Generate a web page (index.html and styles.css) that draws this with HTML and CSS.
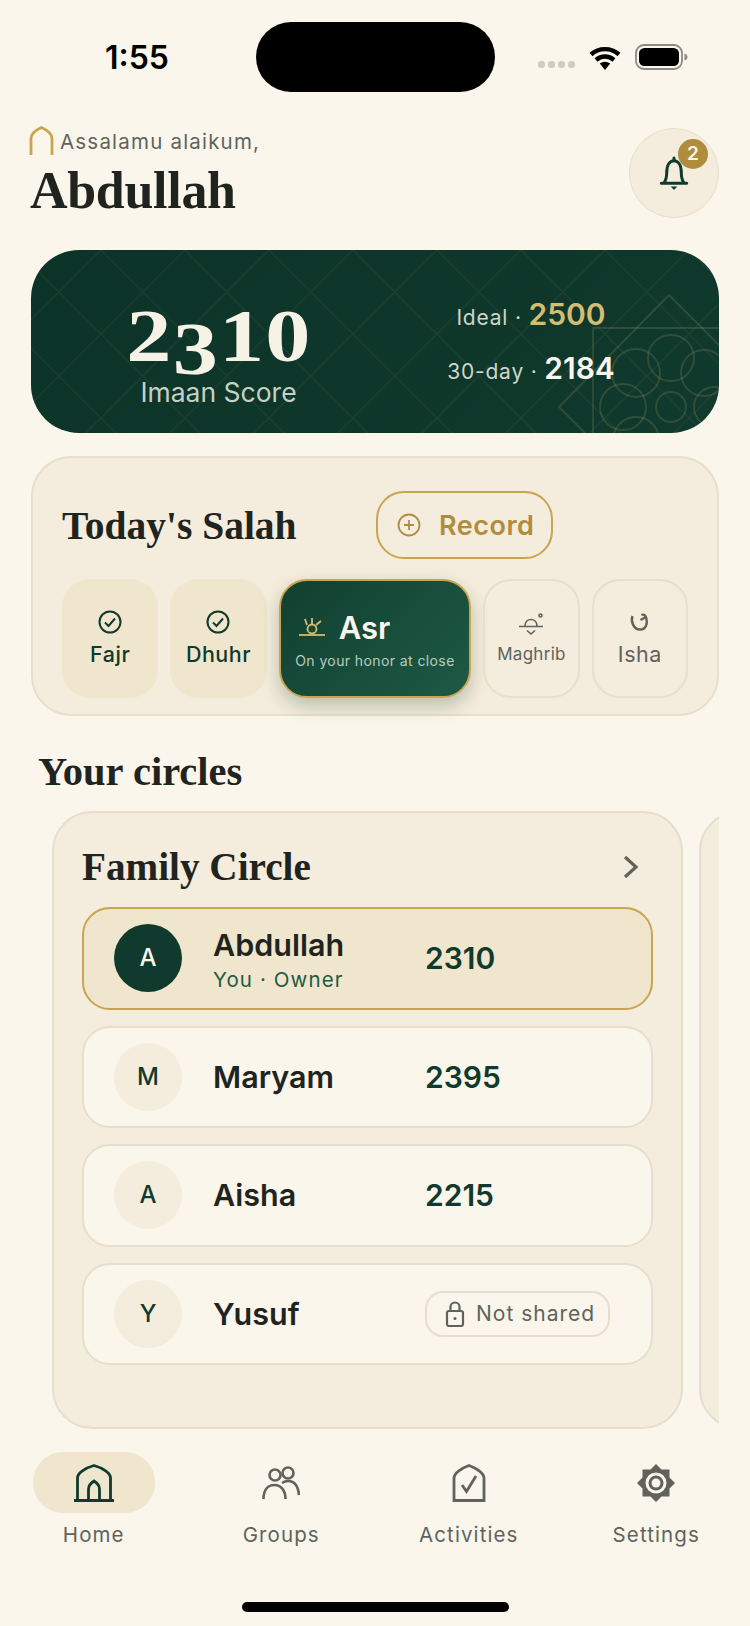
FILE: index.html
```html
<!DOCTYPE html>
<html lang="en">
<head>
    <meta charset="UTF-8">
    <meta name="viewport" content="width=device-width, initial-scale=1.0">
    <title>Imaan Score</title>
    <link rel="stylesheet" href="styles.css">
</head>
<body>
    <div class="status-bar">
        <span class="time">1:55</span>
        <div class="island"></div>
        <div class="status-icons">
            <div class="signal"><i></i><i></i><i></i><i></i></div>
            <svg width="34" height="25" viewBox="0 0 34 25">
                <path d="M17 25l-5.2-6.4a8 8 0 0 1 10.400 0z" fill="#000"/>
                <path d="M3 9.500a21 21 0 0 1 28 0M8 15a13.500 13.500 0 0 1 18 0" fill="none" stroke="#000" stroke-width="4.400"/>
            </svg>
            <svg width="53" height="26" viewBox="0 0 53 26">
                <rect x="1" y="1" width="46" height="24" rx="8" fill="none" stroke="#8a8a86" stroke-width="1.800"/>
                <rect x="4" y="4" width="40" height="18" rx="5.500" fill="#000"/>
                <path d="M49.500 9.500c2 .5 3 2 3 3.500s-1 3-3 3.500z" fill="#8a8a86"/>
            </svg>
        </div>
    </div>

    <header class="header">
        <div>
            <div class="greeting">
                <svg width="25" height="30" viewBox="0 0 25 30"><path d="M2 29V12.500C2 8 7 4 12.500 1.500 18 4 23 8 23 12.500V29" fill="none" stroke="#c9a550" stroke-width="2.800"/></svg>
                <span>Assalamu alaikum,</span>
            </div>
            <h1>Abdullah</h1>
        </div>
        <div class="bell">
            <svg width="30" height="36" viewBox="0 0 32 37">
                <path d="M16 2.500v3M5 29.500c2.500-3 3.200-5.500 3.200-11C8.200 10 11.500 5.500 16 5.500S23.800 10 23.800 18.500c0 5.500.7 8 3.200 11zM2.500 29.500h27" fill="none" stroke="#0f3a2d" stroke-width="3.200" stroke-linecap="round" stroke-linejoin="round"/>
                <path d="M12.500 33h7l-3.500 3.500z" fill="#0f3a2d"/>
            </svg>
            <span class="badge">2</span>
        </div>
    </header>

    <section class="hero">
        <svg class="hero-art" width="688" height="183" viewBox="0 0 688 183">
            <defs>
                <pattern id="lattice" width="84" height="84" patternUnits="userSpaceOnUse" x="-14">
                    <path d="M-2 -2L86 86M86 -2L-2 86" stroke="#c9b37a" stroke-opacity=".08" stroke-width="1.200"/>
                </pattern>
            </defs>
            <rect width="688" height="183" fill="url(#lattice)"/>
            <g fill="none" stroke="#c9b37a" stroke-opacity=".18" stroke-width="1.800">
                <path d="M638 45L528 157L570 199M638 45L730 137"/>
                <path d="M562 199V78H700"/>
                <circle cx="605" cy="123" r="24"/>
                <circle cx="640" cy="108" r="23"/>
                <circle cx="673" cy="123" r="23"/>
                <circle cx="592" cy="157" r="23"/>
                <circle cx="640" cy="157" r="15"/>
                <circle cx="683" cy="157" r="20"/>
                <circle cx="605" cy="190" r="23"/>
            </g>
        </svg>
        <div class="hero-score">
            <div class="score"><span class="digits">2<span class="low">3</span>10</span></div>
            <div class="score-label">Imaan Score</div>
        </div>
        <div class="hero-stats">
            <div class="stat">Ideal · <b class="gold">2500</b></div>
            <div class="stat">30-day · <b>2184</b></div>
        </div>
    </section>

    <section class="salah-card">
        <div class="salah-head">
            <h2>Today's Salah</h2>
            <button class="record">
                <svg width="24" height="24" viewBox="0 0 24 24"><circle cx="12" cy="12" r="10.500" fill="none" stroke="#b08d3c" stroke-width="1.800"/><path d="M12 7v10M7 12h10" stroke="#b08d3c" stroke-width="1.800"/></svg>
                Record
            </button>
        </div>
        <div class="prayers">
            <div class="prayer done">
                <svg width="24" height="24" viewBox="0 0 24 24"><circle cx="12" cy="12" r="10.500" fill="none" stroke="#0f3a2d" stroke-width="2"/><path d="M7 12.500l3.500 3.500L17 8.500" fill="none" stroke="#0f3a2d" stroke-width="2"/></svg>
                <span>Fajr</span>
            </div>
            <div class="prayer done">
                <svg width="24" height="24" viewBox="0 0 24 24"><circle cx="12" cy="12" r="10.500" fill="none" stroke="#0f3a2d" stroke-width="2"/><path d="M7 12.500l3.500 3.500L17 8.500" fill="none" stroke="#0f3a2d" stroke-width="2"/></svg>
                <span>Dhuhr</span>
            </div>
            <div class="prayer current">
                <div class="current-top">
                    <svg width="26" height="18" viewBox="0 0 26 18" fill="none" stroke="#d4bc72" stroke-width="1.800"><path d="M0 17h26"/><circle cx="13" cy="11" r="4.500"/><path d="M8 7L6 1M13 6V0M17 7l5-4"/></svg>
                    <span>Asr</span>
                </div>
                <div class="current-note">On your honor at close</div>
            </div>
            <div class="prayer upcoming small">
                <svg width="26" height="24" viewBox="0 0 26 24" fill="none" stroke="#5f635c" stroke-width="1.600"><path d="M1 13.500h24M7 13c0-4 2.500-6.500 6-6.500s6 2.500 6 6.500M9 17.500l4 3.500 4-3.500"/><circle cx="22.500" cy="2.500" r="1.500"/></svg>
                <span>Maghrib</span>
            </div>
            <div class="prayer upcoming">
                <svg width="24" height="24" viewBox="0 0 24 24" fill="none" stroke="#5f635c" stroke-width="2.400"><path d="M4.500 6C2.500 11 5.500 19.500 12 19.500c6 0 8-6 6-12.500-1-2-3-3-4.500-2"/><path d="M12.500 10l5.500-3"/></svg>
                <span>Isha</span>
            </div>
        </div>
    </section>

    <h2 class="section-title">Your circles</h2>

    <div class="circles">
        <section class="circle-card">
            <div class="circle-head">
                <h2>Family Circle</h2>
                <svg width="18" height="24" viewBox="0 0 18 24"><path d="M3 2l11 10L3 22" fill="none" stroke="#5f635c" stroke-width="3.200"/></svg>
            </div>
            <div class="members">
                <div class="member me">
                    <div class="avatar">A</div>
                    <div class="member-name">Abdullah<small>You · Owner</small></div>
                    <div class="member-score">2310</div>
                </div>
                <div class="member">
                    <div class="avatar">M</div>
                    <div class="member-name">Maryam</div>
                    <div class="member-score">2395</div>
                </div>
                <div class="member">
                    <div class="avatar">A</div>
                    <div class="member-name">Aisha</div>
                    <div class="member-score">2215</div>
                </div>
                <div class="member">
                    <div class="avatar">Y</div>
                    <div class="member-name">Yusuf</div>
                    <div class="not-shared">
                        <svg width="20" height="26" viewBox="0 0 20 26" fill="none" stroke="#5f635c" stroke-width="2.200"><rect x="2" y="10" width="16" height="15" rx="2"/><path d="M5.500 10V6a4.500 4.500 0 0 1 9 0v4"/><circle cx="10" cy="17.500" r="1.500" fill="#5f635c" stroke="none"/></svg>
                        Not shared
                    </div>
                </div>
            </div>
        </section>
        <section class="circle-card"></section>
    </div>

    <nav class="tabs">
        <div class="tab active">
            <div class="tab-icon">
                <svg width="40" height="38" viewBox="0 0 40 38" fill="none" stroke="#0f3a2d" stroke-width="2.800"><path d="M3.500 36V14C3.500 9 11 4 20 1.500 29 4 36.500 9 36.500 14V36M0 36.500h40"/><path d="M14.500 36V25C14.500 22 17 19 20 17 23 19 25.500 22 25.500 25V36"/></svg>
            </div>
            <span>Home</span>
        </div>
        <div class="tab">
            <div class="tab-icon">
                <svg width="38" height="34" viewBox="0 0 38 34" fill="none" stroke="#5f635c" stroke-width="2.600"><ellipse cx="13" cy="9" rx="5.500" ry="5.500"/><ellipse cx="26" cy="7" rx="5.500" ry="5.500"/><path d="M1.500 33c0-10 5-14 11-14s11 5 11 14M20 17c1.500-1 3.500-2 6-2 6 0 10 4 11 14"/></svg>
            </div>
            <span>Groups</span>
        </div>
        <div class="tab">
            <div class="tab-icon">
                <svg width="34" height="38" viewBox="0 0 34 38" fill="none" stroke="#5f635c" stroke-width="2.800"><path d="M2 36.500V14C2 9 10 4 17 1.500 24 4 32 9 32 14v22.500z"/><path d="M10 21l4.500 6.500L24 12"/></svg>
            </div>
            <span>Activities</span>
        </div>
        <div class="tab">
            <div class="tab-icon">
                <svg width="38" height="38" viewBox="0 0 38 38"><path d="M19 0l5.500 5.500H32.500V13.500L38 19l-5.500 5.500V32.500H24.500L19 38l-5.500-5.500H5.500V24.500L0 19l5.500-5.500V5.500H13.500z" fill="#5f635c"/><circle cx="19" cy="19" r="10.500" fill="#fbf6ec"/><circle cx="19" cy="19" r="7.500" fill="#5f635c"/><circle cx="19" cy="19" r="4.500" fill="#fbf6ec"/></svg>
            </div>
            <span>Settings</span>
        </div>
    </nav>

    <div class="home-bar"></div>
</body>
</html>
```

FILE: styles.css
```css
body {
    font-family: Inter, "Liberation Sans", sans-serif;
    background-color: #fbf6ec;
    color: #1f241e;
    margin: 0;
    padding: 0;
    width: 750px;
    height: 1626px;
    overflow: hidden;
    box-sizing: border-box;
}

h1, h2 {
    font-family: "Liberation Serif", serif;
    font-weight: 700;
    margin: 0;
}

/* Status bar */
.status-bar {
    display: flex;
    align-items: center;
    height: 70px;
    padding: 22px 62px 0 105px;
}

.time {
    width: 151px;
    font-size: 32px;
    font-weight: 600;
    color: #000;
}

.island {
    width: 239px;
    height: 70px;
    background: #000;
    border-radius: 35px;
}

.status-icons {
    display: flex;
    align-items: center;
    gap: 13px;
    margin-left: auto;
}

.signal {
    display: flex;
    gap: 3px;
    margin-top: 15px;
}

.signal i {
    width: 7px;
    height: 7px;
    background: #cfccc4;
    border-radius: 3px;
}

/* Header */
.header {
    display: flex;
    justify-content: space-between;
    align-items: flex-start;
    margin-top: 36px;
    padding: 0 31px 0 30px;
}

.greeting {
    display: flex;
    align-items: center;
    gap: 6px;
    margin: -2px 0 0 -1px;
    font-size: 20.500px;
    letter-spacing: 1.200px;
    color: #5f635c;
}

.greeting svg {
    flex: none;
}

h1 {
    font-size: 52px;
    line-height: 54px;
    letter-spacing: -0.3px;
    margin-top: 8px;
}

.bell {
    position: relative;
    display: flex;
    align-items: center;
    justify-content: center;
    width: 88px;
    height: 88px;
    background: #f4ecdc;
    border: 1px solid #e6dfcd;
    border-radius: 50%;
}

.badge {
    position: absolute;
    top: 10px;
    right: 10px;
    width: 30px;
    height: 30px;
    line-height: 30px;
    text-align: center;
    background: #b08d3c;
    color: #fbf6ec;
    font-size: 19px;
    font-weight: 600;
    border-radius: 50%;
}

/* Score card */
.hero {
    position: relative;
    display: grid;
    grid-template-columns: 375px 250px;
    align-items: center;
    height: 183px;
    margin: 32px 31px 0;
    background: linear-gradient(135deg, #0c3327, #103a2d);
    border-radius: 48px;
    overflow: hidden;
}

.hero-art {
    position: absolute;
    top: 0;
    left: 0;
}

.hero-score {
    position: relative;
    text-align: center;
    padding-top: 23px;
}

.score {
    font-family: "Liberation Serif", serif;
    font-weight: 700;
    font-size: 74px;
    line-height: 72px;
    color: #f7f2e6;
}

.score .digits {
    display: inline-block;
    letter-spacing: 1px;
    transform: scaleX(1.22);
}

.score .low {
    position: relative;
    top: 13px;
}

.score-label {
    margin-top: 5px;
    font-size: 26.500px;
    line-height: 30px;
    color: #c3d2c6;
}

.hero-stats {
    position: relative;
    text-align: center;
    padding-top: 6px;
}

.stat {
    font-size: 21px;
    line-height: 54px;
    letter-spacing: .8px;
    color: #cdd6c9;
}

.stat b {
    font-size: 30px;
    font-weight: 600;
    line-height: 0;
    letter-spacing: 0;
    color: #fbf6ec;
}

.stat b.gold {
    color: #d4bc72;
}

/* Salah card */
.salah-card {
    height: 260px;
    margin: 23px 31px 0;
    padding: 33px 29px 0;
    background: #f4ecdc;
    border: 2px solid #e6dfcd;
    border-radius: 40px;
    box-sizing: border-box;
}

.salah-head {
    display: flex;
    align-items: flex-start;
    gap: 80px;
}

.salah-head h2 {
    font-size: 39.500px;
    line-height: 68px;
    width: 234px;
    margin-top: 1px;
    white-space: nowrap;
}

.record {
    display: flex;
    align-items: center;
    gap: 18px;
    width: 177px;
    height: 68px;
    padding: 0 0 0 19px;
    background: transparent;
    border: 2px solid #c9a550;
    border-radius: 28px;
    font-family: inherit;
    font-size: 27px;
    font-weight: 600;
    letter-spacing: .5px;
    color: #b08d3c;
    box-sizing: border-box;
}

.prayers {
    display: grid;
    grid-template-columns: 1fr 1fr 2fr 1fr 1fr;
    gap: 12px;
    margin-top: 19px;
}

.prayer {
    display: flex;
    flex-direction: column;
    align-items: center;
    justify-content: center;
    gap: 7px;
    height: 119px;
    border-radius: 28px;
    box-sizing: border-box;
    font-size: 21.500px;
    letter-spacing: .5px;
}

.prayer.done {
    background: #f0e6ce;
    color: #0f3a2d;
    font-weight: 500;
}

.prayer.upcoming {
    border: 2px solid #e6dfcd;
    color: #5f635c;
}

.prayer.small {
    font-size: 17px;
    letter-spacing: .3px;
}

.prayer.current {
    gap: 6px;
    background: linear-gradient(135deg, #123f30, #1d5a45);
    border: 2.500px solid #c9a550;
    box-shadow: 0 8px 18px rgba(15, 58, 45, 0.25);
    color: #fbf6ec;
}

.current-top {
    display: flex;
    align-items: center;
    gap: 14px;
    align-self: flex-start;
    margin-left: 18px;
    font-size: 31px;
    font-weight: 600;
    letter-spacing: 0;
}

.current-note {
    font-size: 14px;
    letter-spacing: .4px;
    color: #b9cbbf;
}

/* Circles */
.section-title {
    font-size: 40.500px;
    line-height: 46px;
    margin: 33px 0 0 38px;
}

.circles {
    display: flex;
    gap: 16px;
    width: 667px;
    height: 618px;
    margin: 16px 0 0 52px;
    overflow: hidden;
}

.circle-card {
    flex: none;
    width: 631px;
    height: 618px;
    padding: 29px 28px 0;
    background: #f4ecdc;
    border: 2px solid #e6dfcd;
    border-radius: 40px;
    box-sizing: border-box;
}

.circle-head {
    display: flex;
    align-items: center;
    justify-content: space-between;
    padding-right: 13px;
}

.circle-head h2 {
    font-size: 39.200px;
    line-height: 50px;
}

.members {
    display: flex;
    flex-direction: column;
    gap: 16px;
    margin-top: 15px;
}

.member {
    display: grid;
    grid-template-columns: 68px 243px auto;
    align-items: center;
    height: 102.500px;
    padding-left: 30px;
    background: #fbf6ec;
    border: 2px solid #e6dfcd;
    border-radius: 28px;
    box-sizing: border-box;
}

.member.me {
    background: #f0e6ce;
    border-color: #c9a550;
}

.avatar {
    width: 68px;
    height: 68px;
    line-height: 68px;
    text-align: center;
    background: #f4ecdc;
    color: #0f3a2d;
    font-size: 24px;
    font-weight: 500;
    border-radius: 50%;
}

.me .avatar {
    background: #0f3a2d;
    color: #fbf6ec;
}

.member-name {
    padding-left: 31px;
    font-size: 30.500px;
    font-weight: 600;
    line-height: 36px;
}

.me .member-name {
    padding-top: 4px;
}

.member-name small {
    display: block;
    margin-top: 4px;
    font-size: 20.500px;
    font-weight: 400;
    line-height: 26px;
    letter-spacing: 1.100px;
    color: #235a44;
}

.member-score {
    font-size: 30px;
    font-weight: 600;
    color: #0f3a2d;
}

.not-shared {
    display: flex;
    align-items: center;
    gap: 11px;
    width: 185px;
    height: 46px;
    padding-left: 18px;
    border: 2px solid #e6dfcd;
    border-radius: 18px;
    box-sizing: border-box;
    font-size: 21px;
    letter-spacing: 1px;
    color: #5f635c;
}

/* Bottom tabs */
.tabs {
    display: grid;
    grid-template-columns: repeat(4, 1fr);
    margin-top: 23px;
}

.tab {
    display: flex;
    flex-direction: column;
    align-items: center;
    font-size: 20.500px;
    letter-spacing: 1.100px;
    color: #5f635c;
}

.tab-icon {
    display: flex;
    align-items: center;
    justify-content: center;
    width: 122px;
    height: 61px;
    border-radius: 30px;
    margin-bottom: 9px;
}

.tab.active .tab-icon {
    background: #f0e6ce;
}

.home-bar {
    width: 267px;
    height: 10px;
    margin: 55px auto 0;
    background: #000;
    border-radius: 5px;
}
```
